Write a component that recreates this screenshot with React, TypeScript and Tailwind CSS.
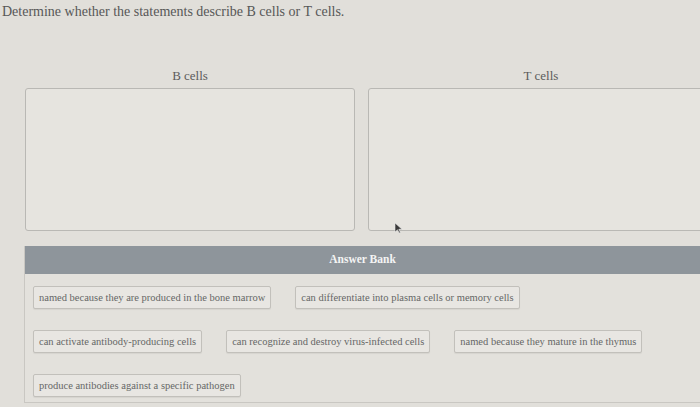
const bank: string[][] = [
  [
    "named because they are produced in the bone marrow",
    "can differentiate into plasma cells or memory cells",
  ],
  [
    "can activate antibody-producing cells",
    "can recognize and destroy virus-infected cells",
    "named because they mature in the thymus",
  ],
  ["produce antibodies against a specific pathogen"],
];

function Chip({ text }: { text: string }) {
  return (
    <div className="h-[23px] px-[5px] flex items-center rounded-[2px] border border-[#c2c0bb] bg-[#e8e6e2] text-[10.5px] text-[#666666] whitespace-nowrap shadow-[0_1px_1px_rgba(0,0,0,0.06)]">
      {text}
    </div>
  );
}

function DropZone({ label, width }: { label: string; width: string }) {
  return (
    <div className={`${width} shrink-0`}>
      <div className="text-center text-[13px] leading-[16px] text-[#5c5c5c]">{label}</div>
      <div className="mt-[4px] h-[143px] rounded-[3px] border-[1.5px] border-[#b9b8b4] bg-[#e6e4df]" />
    </div>
  );
}

export default function App() {
  return (
    <div className="relative w-[700px] h-[407px] overflow-hidden bg-[#e1dfda] font-['Liberation_Serif',serif] text-[#575757]">
      <p className="pl-[2px] pt-[3px] text-[14px] leading-[17px]">
        Determine whether the statements describe B cells or T cells.
      </p>

      {/* drop targets */}
      <div className="mt-[48px] ml-[25px] flex gap-[13px]">
        <DropZone label="B cells" width="w-[330px]" />
        <DropZone label="T cells" width="w-[346px]" />
      </div>

      {/* answer bank */}
      <div className="mt-[15px] ml-[24px] border-l border-b border-[#c9c7c2] bg-[#e3e1dc]">
        <div className="h-[28px] flex items-center justify-center bg-[#8e959b] text-[11.5px] font-bold text-[#f4f4f4]">
          Answer Bank
        </div>
        <div className="pl-[8px] pt-[12px] pb-[5px] flex flex-col gap-[21px]">
          {bank.map((row, i) => (
            <div key={i} className="flex gap-[24px]">
              {row.map((t) => (
                <Chip key={t} text={t} />
              ))}
            </div>
          ))}
        </div>
      </div>

      {/* mouse pointer */}
      <svg
        className="absolute left-[394px] top-[222px]"
        width="9"
        height="12"
        viewBox="0 0 9 12"
      >
        <path d="M1 1 L1 10 L3.5 7.8 L5.2 11 L6.4 10.4 L4.8 7.3 L8 7.2 Z" fill="#3a3a3a" stroke="#e8e8e8" strokeWidth="0.6" />
      </svg>
    </div>
  );
}
